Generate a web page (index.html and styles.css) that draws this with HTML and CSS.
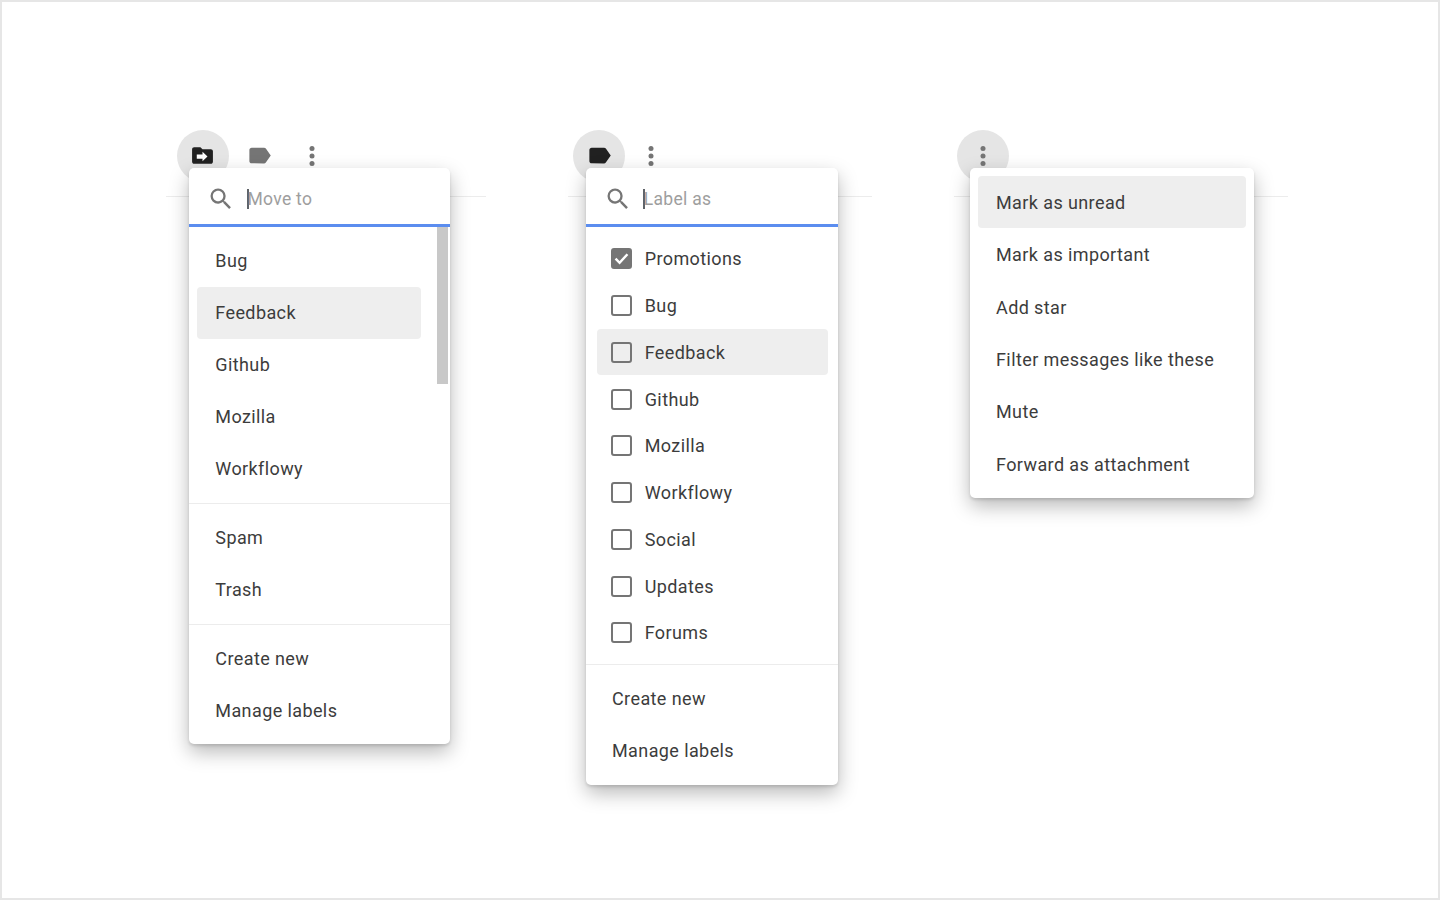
FILE: index.html
```html
<!DOCTYPE html>
<html lang="en">
<head>
<meta charset="utf-8">
<title>Menus</title>
<link rel="stylesheet" href="styles.css">
</head>
<body>
<main class="stage">
  <section class="col col-move">
    <div class="toolbar">
      <span class="slot active">
        <svg class="ic-folder" viewBox="0 0 24 24"><path fill="#212121" d="M20 6h-8l-2-2H4c-1.1 0-2 .9-2 2v12c0 1.1.9 2 2 2h16c1.1 0 2-.9 2-2V8c0-1.1-.9-2-2-2z"/><path fill="#fff" d="M6.5 11h5.5V8.4l4.8 4.6-4.8 4.6V15H6.5z"/></svg>
      </span>
      <span class="slot">
        <svg class="ic-label" viewBox="0 0 24 24"><path fill="#757575" d="M17.63 5.84C17.27 5.33 16.67 5 16 5L5 5.01C3.9 5.01 3 5.9 3 7v10c0 1.1.9 1.99 2 1.99L16 19c.67 0 1.27-.33 1.63-.84L22 12l-4.37-6.16z"/></svg>
      </span>
      <span class="slot dots">
        <svg class="ic-dots" viewBox="0 0 24 24"><g fill="#757575"><circle cx="12" cy="6" r="2"/><circle cx="12" cy="12" r="2"/><circle cx="12" cy="18" r="2"/></g></svg>
      </span>
    </div>
    <div class="rule"></div>
    <div class="menu">
      <div class="search">
        <svg class="ic-search" viewBox="0 0 24 24"><path fill="#757575" d="M15.5 14h-.79l-.28-.27A6.47 6.47 0 0 0 16 9.5 6.5 6.5 0 1 0 9.5 16c1.61 0 3.09-.59 4.23-1.57l.27.28v.79l5 4.99L20.49 19l-4.99-5zm-6 0C7.01 14 5 11.99 5 9.5S7.01 5 9.5 5 14 7.01 14 9.5 11.99 14 9.5 14z"/></svg>
        <span class="caret"></span>
        <span class="placeholder">Move to</span>
      </div>
      <div class="body">
        <span class="scrollbar"></span>
        <ul class="list">
          <li class="row">Bug</li>
          <li class="row hl">Feedback</li>
          <li class="row">Github</li>
          <li class="row">Mozilla</li>
          <li class="row">Workflowy</li>
        </ul>
        <ul class="list sep">
          <li class="row">Spam</li>
          <li class="row">Trash</li>
        </ul>
        <ul class="list sep">
          <li class="row">Create new</li>
          <li class="row">Manage labels</li>
        </ul>
      </div>
    </div>
  </section>

  <section class="col col-label">
    <div class="toolbar">
      <span class="slot active">
        <svg class="ic-label" viewBox="0 0 24 24"><path fill="#212121" d="M17.63 5.84C17.27 5.33 16.67 5 16 5L5 5.01C3.9 5.01 3 5.9 3 7v10c0 1.1.9 1.99 2 1.99L16 19c.67 0 1.27-.33 1.63-.84L22 12l-4.37-6.16z"/></svg>
      </span>
      <span class="slot dots">
        <svg class="ic-dots" viewBox="0 0 24 24"><g fill="#757575"><circle cx="12" cy="6" r="2"/><circle cx="12" cy="12" r="2"/><circle cx="12" cy="18" r="2"/></g></svg>
      </span>
    </div>
    <div class="rule"></div>
    <div class="menu">
      <div class="search">
        <svg class="ic-search" viewBox="0 0 24 24"><path fill="#757575" d="M15.5 14h-.79l-.28-.27A6.47 6.47 0 0 0 16 9.5 6.5 6.5 0 1 0 9.5 16c1.61 0 3.09-.59 4.23-1.57l.27.28v.79l5 4.99L20.49 19l-4.99-5zm-6 0C7.01 14 5 11.99 5 9.5S7.01 5 9.5 5 14 7.01 14 9.5 11.99 14 9.5 14z"/></svg>
        <span class="caret"></span>
        <span class="placeholder">Label as</span>
      </div>
      <div class="body">
        <ul class="list">
          <li class="check"><span class="box on"><svg viewBox="0 0 16 16"><path fill="none" stroke="#fff" stroke-width="2.3" d="M2.4 8.2l3.8 3.8 7.4-8"/></svg></span>Promotions</li>
          <li class="check"><span class="box"></span>Bug</li>
          <li class="check hl"><span class="box"></span>Feedback</li>
          <li class="check"><span class="box"></span>Github</li>
          <li class="check"><span class="box"></span>Mozilla</li>
          <li class="check"><span class="box"></span>Workflowy</li>
          <li class="check"><span class="box"></span>Social</li>
          <li class="check"><span class="box"></span>Updates</li>
          <li class="check"><span class="box"></span>Forums</li>
        </ul>
        <ul class="list sep">
          <li class="row">Create new</li>
          <li class="row">Manage labels</li>
        </ul>
      </div>
    </div>
  </section>

  <section class="col col-more">
    <div class="toolbar">
      <span class="slot active">
        <svg class="ic-dots" viewBox="0 0 24 24"><g fill="#757575"><circle cx="12" cy="6" r="2"/><circle cx="12" cy="12" r="2"/><circle cx="12" cy="18" r="2"/></g></svg>
      </span>
    </div>
    <div class="rule"></div>
    <div class="menu">
      <ul class="list">
        <li class="row hl">Mark as unread</li>
        <li class="row">Mark as important</li>
        <li class="row">Add star</li>
        <li class="row">Filter messages like these</li>
        <li class="row">Mute</li>
        <li class="row">Forward as attachment</li>
      </ul>
    </div>
  </section>
</main>
</body>
</html>
```
FILE: styles.css
```css
* { box-sizing: border-box; }
html, body { margin: 0; padding: 0; background: #fff; }
body { font-family: Roboto, "Noto Sans", sans-serif; color: #3c3c3c; }

.stage {
  width: 1440px;
  height: 900px;
  border: 2px solid #e6e6e6;
  padding: 127.5px 0 0 164px;
  display: flex;
  align-items: flex-start;
  gap: 82px;
  overflow: hidden;
}

.col { flex: none; }
.col-move { width: 320px; }
.col-label { width: 304px; }
.col-more { width: 334px; }

.toolbar { display: flex; gap: 5px; height: 52px; }
.col-move .toolbar { padding-left: 10.7px; }
.col-label .toolbar { padding-left: 5.2px; }
.col-more .toolbar { padding-left: 3px; }

.slot {
  width: 52px;
  height: 52px;
  flex: none;
  display: flex;
  align-items: center;
  justify-content: center;
  border-radius: 50%;
}
.slot.active { background: #e5e5e5; }
.slot.dots { width: 42px; }

.ic-folder { width: 25px; height: 25px; display: block; }
.ic-label { width: 27px; height: 27px; display: block; }
.ic-dots { width: 30px; height: 30px; display: block; }

.rule { height: 1px; margin-top: 14.5px; background: #ececec; }

.menu {
  position: relative;
  margin-top: -29px;
  background: #fff;
  border-radius: 5px;
  box-shadow: 0 2px 3px rgba(0,0,0,.12), 0 8px 20px rgba(0,0,0,.28);
}
.col-move .menu { margin-left: 23.3px; width: 260.4px; }
.col-label .menu { margin-left: 18px; width: 252px; }
.col-more .menu { margin-left: 16px; width: 284px; padding: 8px 0; }

.search {
  height: 59px;
  display: flex;
  align-items: center;
  border-bottom: 3px solid #5b8def;
  padding-top: 5px;
}
.ic-search { width: 28px; height: 28px; flex: none; margin-left: 17.4px; }
.col-label .ic-search { margin-left: 17.5px; }
.caret { width: 2px; height: 20px; margin-left: 12.3px; background: #5f6368; flex: none; }
.col-label .caret { margin-left: 11.8px; }
.placeholder { font-size: 17.5px; letter-spacing: .3px; color: #9e9e9e; margin-left: -1.5px; }

.body { position: relative; padding: 8px 0 7px; }
.col-label .body { padding-bottom: 8.25px; }
.scrollbar {
  position: absolute;
  top: 0;
  right: 1.7px;
  width: 11px;
  height: 157px;
  background: #c8c8c8;
}

.list { list-style: none; margin: 0; padding: 0; }
.list.sep { border-top: 1px solid #ececec; margin-top: 8px; padding-top: 8px; }

.row, .check {
  font-size: 18px;
  letter-spacing: .4px;
  display: flex;
  align-items: center;
  border-radius: 4px;
}
.row { height: 52px; margin: 0 8px; padding: 0 0 2px 18px; }
.col-move .row { margin-right: 29px; }
.col-label .row { margin-left: 8px; padding: 0 0 0 18px; }
.col-more .row { height: 52.33px; padding: .6px 0 0 18px; }

.check { height: 46.75px; margin: 0 10px 0 11px; padding: 1px 0 0 14px; gap: 12.7px; }
.hl { background: #eee; }

.box {
  width: 21px;
  height: 21px;
  flex: none;
  border: 2.6px solid #757575;
  border-radius: 3px;
  display: block;
}
.box.on { background: #757575; }
.box svg { display: block; width: 100%; height: 100%; }
```
